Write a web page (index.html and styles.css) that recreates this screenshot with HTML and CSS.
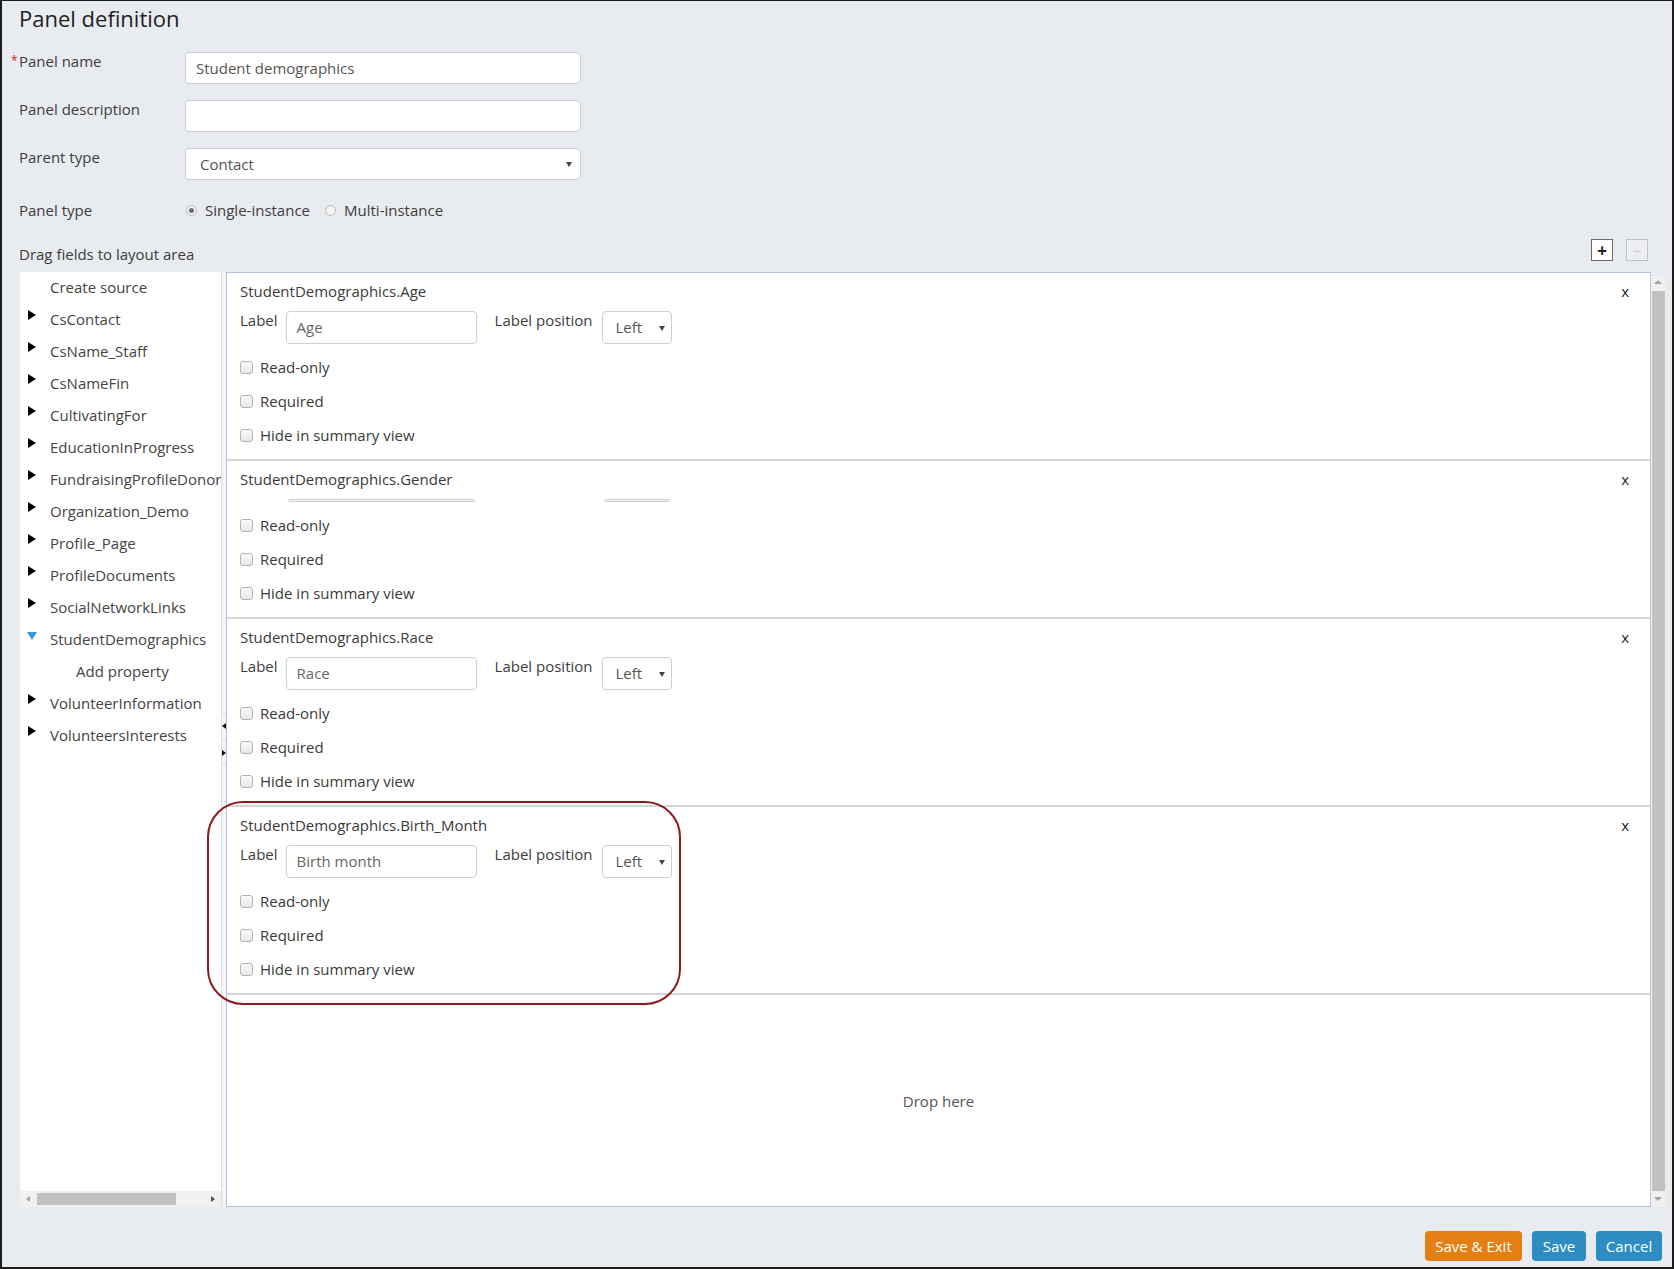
FILE: index.html
```html
<!DOCTYPE html>
<html lang="en">
<head>
<meta charset="utf-8">
<title>Panel definition</title>
<link rel="stylesheet" href="styles.css">
</head>
<body>
<div class="page">
  <h1 class="title">Panel definition</h1>

  <div class="form">
    <div class="row">
      <div class="lbl"><span class="star">*</span>Panel name</div>
      <div class="txt">Student demographics</div>
    </div>
    <div class="row">
      <div class="lbl">Panel description</div>
      <div class="txt"></div>
    </div>
    <div class="row">
      <div class="lbl">Parent type</div>
      <div class="txt sel"><span class="sel-val">Contact</span><span class="caret"></span></div>
    </div>
    <div class="row row-radio">
      <div class="lbl">Panel type</div>
      <div class="radios">
        <span class="radio on"></span><span class="radio-txt">Single-instance</span>
        <span class="radio"></span><span class="radio-txt">Multi-instance</span>
      </div>
    </div>
  </div>

  <div class="drag-head">
    <div class="drag-title">Drag fields to layout area</div>
    <div class="pm">
      <span class="pm-btn">+</span>
      <span class="pm-btn off">&minus;</span>
    </div>
  </div>

  <div class="workspace">
    <div class="tree">
      <div class="nodes">
        <div class="node"><span class="tri"></span>Create source</div>
        <div class="node"><span class="tri"><span class="t-right"></span></span>CsContact</div>
        <div class="node"><span class="tri"><span class="t-right"></span></span>CsName_Staff</div>
        <div class="node"><span class="tri"><span class="t-right"></span></span>CsNameFin</div>
        <div class="node"><span class="tri"><span class="t-right"></span></span>CultivatingFor</div>
        <div class="node"><span class="tri"><span class="t-right"></span></span>EducationInProgress</div>
        <div class="node"><span class="tri"><span class="t-right"></span></span>FundraisingProfileDonorInformation</div>
        <div class="node"><span class="tri"><span class="t-right"></span></span>Organization_Demo</div>
        <div class="node"><span class="tri"><span class="t-right"></span></span>Profile_Page</div>
        <div class="node"><span class="tri"><span class="t-right"></span></span>ProfileDocuments</div>
        <div class="node"><span class="tri"><span class="t-right"></span></span>SocialNetworkLinks</div>
        <div class="node"><span class="tri"><span class="t-down"></span></span>StudentDemographics</div>
        <div class="node child">Add property</div>
        <div class="node"><span class="tri"><span class="t-right"></span></span>VolunteerInformation</div>
        <div class="node"><span class="tri"><span class="t-right"></span></span>VolunteersInterests</div>
      </div>
      <div class="hscroll">
        <span class="h-arr h-left"></span>
        <span class="h-thumb"></span>
        <span class="h-arr h-right"></span>
      </div>
    </div>

    <div class="splitter">
      <div class="sp-btn"><span class="sp-left"></span></div>
      <div class="sp-btn"><span class="sp-right"></span></div>
    </div>

    <div class="layout">
      <div class="card">
        <div class="card-title">StudentDemographics.Age</div>
        <span class="close">x</span>
        <div class="label-row">
          <span class="f-lbl">Label</span>
          <div class="f-input">Age</div>
          <span class="f-lbl pos">Label position</span>
          <div class="f-select">Left<span class="caret"></span></div>
        </div>
        <div class="checks">
          <div class="chk"><span class="box"></span>Read-only</div>
          <div class="chk"><span class="box"></span>Required</div>
          <div class="chk"><span class="box"></span>Hide in summary view</div>
        </div>
      </div>

      <div class="card">
        <div class="card-title">StudentDemographics.Gender</div>
        <span class="close">x</span>
        <div class="collapsed-row">
          <span class="c-line c-input"></span>
          <span class="c-line c-select"></span>
        </div>
        <div class="checks">
          <div class="chk"><span class="box"></span>Read-only</div>
          <div class="chk"><span class="box"></span>Required</div>
          <div class="chk"><span class="box"></span>Hide in summary view</div>
        </div>
      </div>

      <div class="card">
        <div class="card-title">StudentDemographics.Race</div>
        <span class="close">x</span>
        <div class="label-row">
          <span class="f-lbl">Label</span>
          <div class="f-input">Race</div>
          <span class="f-lbl pos">Label position</span>
          <div class="f-select">Left<span class="caret"></span></div>
        </div>
        <div class="checks">
          <div class="chk"><span class="box"></span>Read-only</div>
          <div class="chk"><span class="box"></span>Required</div>
          <div class="chk"><span class="box"></span>Hide in summary view</div>
        </div>
      </div>

      <div class="card">
        <div class="card-title">StudentDemographics.Birth_Month</div>
        <span class="close">x</span>
        <div class="label-row">
          <span class="f-lbl">Label</span>
          <div class="f-input">Birth month</div>
          <span class="f-lbl pos">Label position</span>
          <div class="f-select">Left<span class="caret"></span></div>
        </div>
        <div class="checks">
          <div class="chk"><span class="box"></span>Read-only</div>
          <div class="chk"><span class="box"></span>Required</div>
          <div class="chk"><span class="box"></span>Hide in summary view</div>
        </div>
      </div>

      <div class="drop">Drop here</div>
    </div>

    <div class="vscroll">
      <span class="v-arr v-up"></span>
      <span class="v-thumb"></span>
      <span class="v-arr v-down"></span>
    </div>
  </div>

  <div class="footer">
    <span class="btn orange">Save &amp; Exit</span>
    <span class="btn blue save">Save</span>
    <span class="btn blue cancel">Cancel</span>
  </div>

  <div class="highlight"></div>
</div>
</body>
</html>
```
FILE: styles.css
```css
* { box-sizing: border-box; }

html, body {
  margin: 0;
  padding: 0;
  background: #e8ebf0;
}

body {
  font-family: "Open Sans", "Noto Sans", "Liberation Sans", sans-serif;
  font-size: 15px;
  color: #3a3a3a;
}

.page {
  position: relative;
  width: 1674px;
  height: 1269px;
  border: 2px solid #1c1c1c;
  border-top-width: 1px;
  background: #e8ebf0;
  padding: 0 7px 0 17px;
  display: flex;
  flex-direction: column;
  overflow: hidden;
}

.title {
  margin: 3px 0 0 0;
  font-size: 22px;
  line-height: 28px;
  font-weight: 400;
  color: #222;
}

/* ---------- top form ---------- */
.form {
  margin-top: 20px;
  display: flex;
  flex-direction: column;
  gap: 16px;
}

.row {
  display: flex;
  height: 32px;
}

.lbl {
  width: 166px;
  line-height: 20px;
  margin-top: -1px;
  color: #3d3d3d;
  position: relative;
}

.star {
  position: absolute;
  left: -8px;
  top: 0;
  color: #d0261e;
  font-size: 12px;
}

.txt {
  width: 396px;
  height: 32px;
  background: #fff;
  border: 1px solid #cdcdcd;
  border-radius: 4px;
  padding: 0 10px;
  line-height: 30px;
  color: #555;
  position: relative;
}

.sel .sel-val { padding-left: 4px; }

.caret {
  position: absolute;
  right: 8px;
  top: 50%;
  margin-top: -2px;
  width: 0;
  height: 0;
  border-left: 3px solid transparent;
  border-right: 3px solid transparent;
  border-top: 5px solid #444;
}

.row-radio {
  height: 20px;
  margin-top: 4px;
}

.row-radio .lbl { margin-top: 0; }

.radios {
  display: flex;
  align-items: center;
  height: 20px;
}

.radio {
  width: 11px;
  height: 11px;
  border-radius: 50%;
  border: 1px solid #b9b9b9;
  background: #f3f3f3;
  margin-left: 1px;
  margin-right: 8px;
  position: relative;
}

.radio.on::after {
  content: "";
  position: absolute;
  left: 2px;
  top: 2px;
  width: 5px;
  height: 5px;
  border-radius: 50%;
  background: #6f6f6f;
}

.radio-txt {
  margin-right: 14px;
  color: #3d3d3d;
}

/* ---------- drag head ---------- */
.drag-head {
  height: 52px;
  display: flex;
  justify-content: space-between;
  align-items: flex-start;
}

.drag-title {
  margin-top: 24px;
  line-height: 20px;
  color: #3d3d3d;
}

.pm {
  display: flex;
  gap: 13px;
  margin-top: 19px;
  margin-right: 17px;
}

.pm-btn {
  width: 22px;
  height: 22px;
  border: 1px solid #6a6a6a;
  background: #fff;
  display: flex;
  align-items: center;
  justify-content: center;
  font-size: 17px;
  font-weight: 700;
  line-height: 1;
  color: #222;
}

.pm-btn.off {
  border-color: #bfc3c8;
  background: #eceef1;
  color: #c6c9cd;
  font-weight: 400;
}

/* ---------- workspace ---------- */
.workspace {
  height: 935px;
  display: flex;
}

.tree {
  width: 201px;
  margin-left: 1px;
  background: #fff;
  display: flex;
  flex-direction: column;
  overflow: hidden;
}

.nodes {
  flex: 1;
  overflow: hidden;
}

.node {
  height: 30px;
  margin-bottom: 2px;
  display: flex;
  align-items: center;
  padding-left: 7px;
  white-space: nowrap;
  color: #444;
}

.node:first-child { margin-top: 0; }

.tri {
  width: 23px;
  flex: none;
  height: 30px;
  position: relative;
}

.t-right {
  position: absolute;
  left: 1px;
  top: 6px;
  width: 0;
  height: 0;
  border-top: 5px solid transparent;
  border-bottom: 5px solid transparent;
  border-left: 8px solid #000;
}

.t-down {
  position: absolute;
  left: 0;
  top: 8px;
  width: 0;
  height: 0;
  border-left: 5px solid transparent;
  border-right: 5px solid transparent;
  border-top: 8px solid #3e98d3;
}

.node.child { padding-left: 56px; }

.hscroll {
  height: 16px;
  background: #f1f1f1;
  position: relative;
  flex: none;
}

.h-thumb {
  position: absolute;
  left: 17px;
  top: 2px;
  width: 139px;
  height: 12px;
  background: #c1c1c1;
}

.h-arr {
  position: absolute;
  top: 5px;
  width: 0;
  height: 0;
  border-top: 3px solid transparent;
  border-bottom: 3px solid transparent;
}

.h-left { left: 6px; border-right: 4px solid #a3a3a3; }
.h-right { right: 6px; border-left: 4px solid #505050; }

.splitter {
  width: 5px;
  background: #f3f4f6;
  border-left: 1px solid #dcdcdc;
  display: flex;
  flex-direction: column;
  padding-top: 441px;
}

.sp-btn {
  height: 26px;
  border-top: 1px solid #dedede;
  position: relative;
}

.sp-btn:last-child { border-bottom: 1px solid #dedede; }

.sp-left {
  position: absolute;
  left: 0;
  top: 9px;
  border-top: 3px solid transparent;
  border-bottom: 3px solid transparent;
  border-right: 4px solid #111;
}

.sp-right {
  position: absolute;
  left: 0;
  top: 10px;
  border-top: 3px solid transparent;
  border-bottom: 3px solid transparent;
  border-left: 4px solid #111;
}

.layout {
  flex: 1;
  background: #fff;
  border: 1px solid #b5c2e0;
  display: flex;
  flex-direction: column;
}

.card {
  position: relative;
  padding: 8px 14px 14px 13px;
  border-bottom: 2px solid #d6d6d6;
}

.card-title {
  line-height: 20px;
  color: #3a3a3a;
}

.close {
  position: absolute;
  right: 21px;
  top: 8px;
  line-height: 20px;
  color: #1f1f1f;
  font-size: 15px;
}

.label-row {
  display: flex;
  align-items: flex-start;
  margin-top: 10px;
  height: 33px;
}

.f-lbl {
  line-height: 18px;
  color: #3d3d3d;
}

.f-lbl.pos {
  margin-left: 18px;
  margin-right: 9px;
}

.f-input {
  margin-left: 8px;
  width: 191px;
  height: 33px;
  border: 1px solid #cfcfcf;
  border-radius: 4px;
  padding-left: 10px;
  line-height: 31px;
  color: #666;
}

.f-select {
  position: relative;
  width: 70px;
  height: 33px;
  border: 1px solid #cfcfcf;
  border-radius: 4px;
  padding-left: 13px;
  line-height: 31px;
  color: #555;
}

.f-select .caret { right: 6px; }

.collapsed-row {
  margin-top: 10px;
  height: 3px;
  display: flex;
}

.c-line {
  height: 3px;
  border: 1px solid #cfcfcf;
  border-radius: 2px;
  background: #f4f4f4;
}

.c-input { margin-left: 48px; width: 187px; }
.c-select { margin-left: 129px; width: 66px; }

.checks {
  margin-top: 13px;
  display: flex;
  flex-direction: column;
  gap: 14px;
}

.chk {
  display: flex;
  align-items: center;
  height: 20px;
  color: #3a3a3a;
}

.box {
  width: 13px;
  height: 13px;
  border: 1px solid #b3b3b3;
  border-radius: 3px;
  background: linear-gradient(#fbfbfb, #e6e6e6);
  margin-right: 7px;
  flex: none;
}

.drop {
  flex: 1;
  display: flex;
  align-items: center;
  justify-content: center;
  color: #555;
}

.vscroll {
  width: 14px;
  margin-top: 4px;
  background: #f1f1f1;
  display: flex;
  flex-direction: column;
  align-items: center;
}

.v-arr {
  flex: none;
  width: 0;
  height: 0;
  border-left: 4px solid transparent;
  border-right: 4px solid transparent;
}

.v-up { margin: 4px 0 7px; border-bottom: 4px solid #a3a3a3; }
.v-down { margin: 6px 0 6px; border-top: 4px solid #a3a3a3; }

.v-thumb {
  flex: 1;
  width: 13px;
  background: #c1c1c1;
}

/* ---------- footer ---------- */
.footer {
  margin-top: 24px;
  display: flex;
  justify-content: flex-end;
  gap: 10px;
  padding-right: 3px;
}

.btn {
  height: 30px;
  border-radius: 4px;
  color: #fff;
  display: flex;
  align-items: center;
  justify-content: center;
  font-size: 15px;
}

.orange { background: #e47f16; width: 97px; }
.blue { background: #2d8dc2; }
.save { width: 54px; }
.cancel { width: 66px; }

/* ---------- annotation highlight ---------- */
.highlight {
  position: absolute;
  left: 205px;
  top: 800px;
  width: 474px;
  height: 204px;
  border: 2px solid #8c1b20;
  border-radius: 36px;
  pointer-events: none;
}
```
